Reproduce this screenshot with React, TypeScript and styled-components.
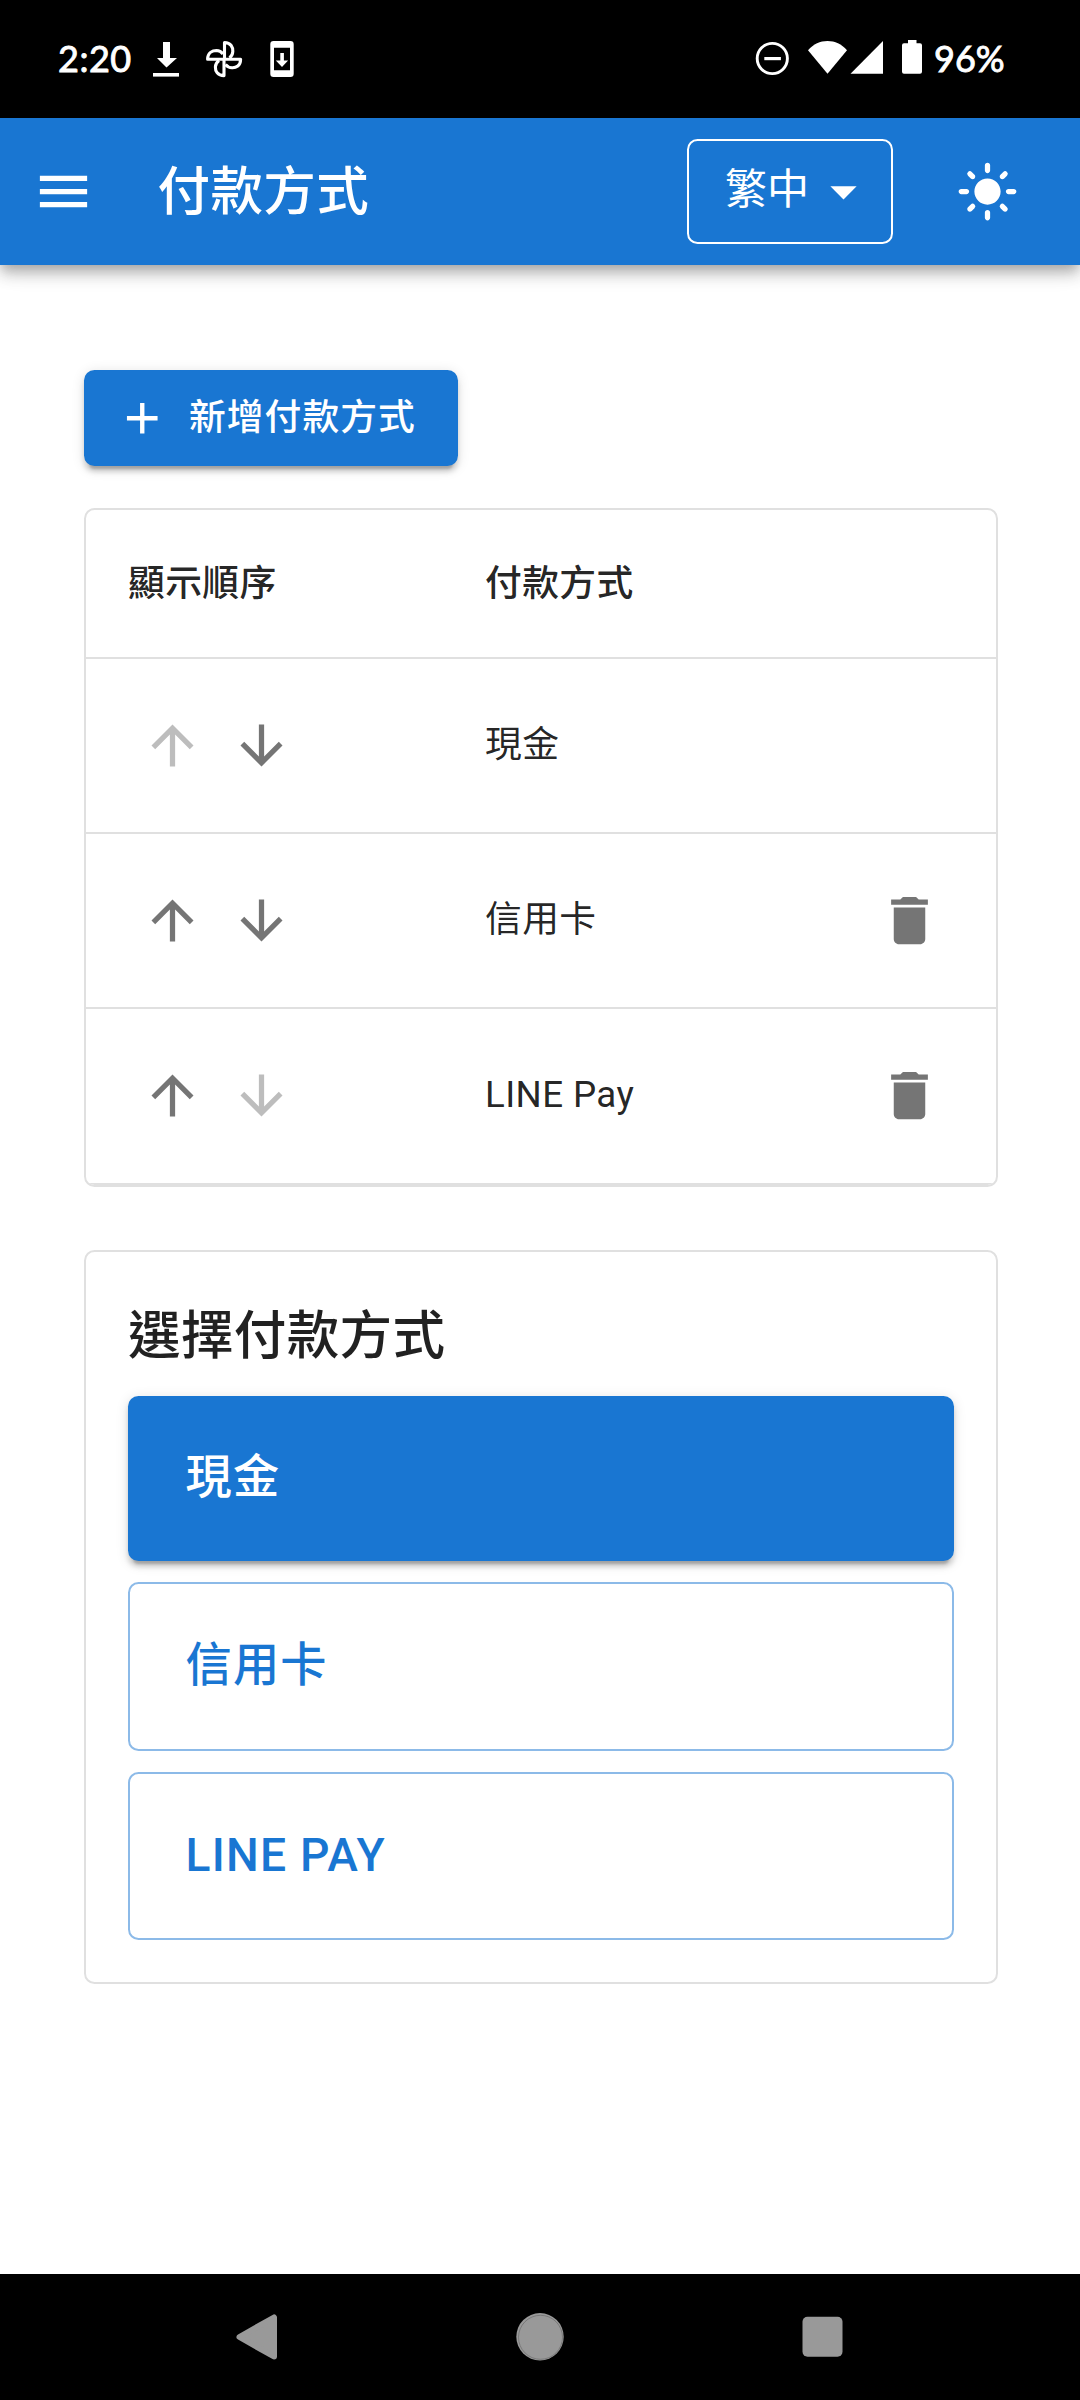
import React, { useState } from "react";
import styled, { createGlobalStyle, css } from "styled-components";
import {
  MdAdd,
  MdArrowDownward,
  MdArrowDropDown,
  MdArrowUpward,
  MdDelete,
  MdLightMode,
  MdMenu,
} from "react-icons/md";

const blue = "#1976d2";
const divider = "#e0e0e0";
const ink = "rgba(0, 0, 0, 0.87)";

const GlobalStyle = createGlobalStyle`
  *, *::before, *::after { box-sizing: border-box; }
  body {
    margin: 0;
    background: #fff;
    color: ${ink};
    font-family: Roboto, "Noto Sans CJK TC", sans-serif;
  }
  button { font-family: inherit; margin: 0; border: 0; background: none; }
  svg { display: block; flex: none; }
`;

const raised = css`
  box-shadow: 0 7.9px 2.6px -5.2px rgba(0, 0, 0, 0.2),
    0 5.2px 5.2px 0 rgba(0, 0, 0, 0.14), 0 2.6px 13.1px 0 rgba(0, 0, 0, 0.12);
`;

const Screen = styled.div`
  width: 1080px;
  height: 2400px;
  display: flex;
  flex-direction: column;
  background: #fff;
  overflow: hidden;
`;

const StatusBar = styled.div`
  height: 118px;
  flex: none;
  background: #000;
  color: #fff;
  display: flex;
  justify-content: space-between;
  padding: 0 76px 0 58px;
`;

const StatusGroup = styled.div<{ $gap: number }>`
  display: flex;
  align-items: center;
  gap: ${(p) => p.$gap}px;
`;

const StatusText = styled.span<{ $width: number; $spacing?: number }>`
  width: ${(p) => p.$width}px;
  padding-bottom: 2px;
  white-space: nowrap;
  font: 400 36px/48px Lato, sans-serif;
  -webkit-text-stroke: 0.9px #fff;
  letter-spacing: ${(p) => p.$spacing ?? 0}px;
`;

const AppBar = styled.header`
  height: 147px;
  flex: none;
  background: ${blue};
  color: #fff;
  display: flex;
  align-items: center;
  padding: 0 40px 0 10.5px;
  box-shadow: 0 5.2px 10.5px -2.6px rgba(0, 0, 0, 0.2),
    0 10.5px 13.1px 0 rgba(0, 0, 0, 0.14), 0 2.6px 26.2px 0 rgba(0, 0, 0, 0.12);
`;

const IconButton = styled.button<{ $pad: number }>`
  display: flex;
  padding: ${(p) => p.$pad}px;
  color: inherit;
`;

const Title = styled.h1`
  margin: 0 auto 0 42px;
  font-size: 52.5px;
  font-weight: 500;
  line-height: 84px;
  letter-spacing: 0.39px;
`;

const LanguageSelect = styled.button`
  width: 206px;
  height: 105px;
  margin-right: 42px;
  padding: 0 16px 0 36px;
  display: flex;
  align-items: center;
  justify-content: space-between;
  border: 2px solid #fff;
  border-radius: 10.5px;
  color: #fff;
  font-size: 42px;
  line-height: 60px;
`;

const LanguageName = styled.span`
  padding-bottom: 3px;
`;

const Main = styled.main`
  flex: 1;
  display: flex;
  flex-direction: column;
  align-items: flex-start;
  padding: 105px 82px 0 84px;
`;

const AddButton = styled.button`
  display: flex;
  align-items: center;
  gap: 21px;
  height: 96px;
  padding: 0 42px 0 31.5px;
  border-radius: 10.5px;
  background: ${blue};
  color: #fff;
  font-size: 36.75px;
  font-weight: 500;
  line-height: 64px;
  letter-spacing: 1.05px;
  ${raised}
`;

const Panel = styled.section`
  width: 100%;
  border: 2px solid ${divider};
  border-radius: 10.5px;
  overflow: hidden;
`;

const TablePanel = styled(Panel)`
  margin-top: 42px;
`;

const Row = styled.div<{ $head?: boolean }>`
  display: grid;
  grid-template-columns: 357px 1fr 173px;
  align-items: center;
  height: ${(p) => (p.$head ? 149 : 175)}px;
  border-bottom: 2px solid ${divider};
  font-size: 36.75px;
  font-weight: ${(p) => (p.$head ? 500 : 400)};
  line-height: ${(p) => (p.$head ? 63 : 52.5)}px;
  letter-spacing: 0.39px;

  &:last-child {
    height: 176px;
    padding-bottom: 1px;
  }
`;

const Cell = styled.div`
  display: flex;
  padding: 0 42px;
`;

const RowAction = styled(IconButton)`
  color: ${(p) => (p.disabled ? "#bdbdbd" : "#757575")};
`;

const ChoicePanel = styled(Panel)`
  margin-top: 63px;
  height: 734px;
  padding: 42px;
`;

const ChoiceTitle = styled.h2`
  margin: 0 0 18px;
  font-size: 52.5px;
  font-weight: 500;
  line-height: 84px;
  letter-spacing: 0.39px;
`;

const ChoiceList = styled.div`
  display: flex;
  flex-direction: column;
  gap: 21px;
`;

const Choice = styled.button<{ $selected: boolean }>`
  width: 100%;
  height: ${(p) => (p.$selected ? 165 : 169)}px;
  padding: 0 ${(p) => (p.$selected ? 57.6 : 55.6)}px 4px;
  border-radius: 10.5px;
  text-align: left;
  text-transform: uppercase;
  font-size: 46.2px;
  font-weight: 500;
  line-height: 80px;
  letter-spacing: 1.2px;
  ${(p) =>
    p.$selected
      ? css`
          background: ${blue};
          color: #fff;
          ${raised}
        `
      : css`
          border: 2px solid rgba(25, 118, 210, 0.5);
          color: ${blue};
        `}

  &:last-child {
    height: 168px;
    padding-bottom: 2px;
  }
`;

const NavBar = styled.nav`
  height: 126px;
  flex: none;
  background: #000;
  display: flex;
  align-items: center;
  justify-content: space-between;
  padding: 0 236px 0 235px;
`;

const NotificationIcons = () => (
  <svg width="146" height="40" viewBox="152 40 146 40" fill="#fff">
    <path d="M163 43h7v16h7l-10.5 9.5L157 59h6z" />
    <path d="M153 74h26v3.6h-26z" />
    <g fill="none" stroke="#fff" strokeWidth="3.1" strokeLinejoin="round">
      <path d="M224.5 60V43.6C231 43.6 233 48.5 232.8 52.5C232.7 55.5 231.3 57.5 229.5 59" />
      <path d="M224 60.3H207.6C207.6 53.8 212.5 51.5 216.5 51.5C219.5 51.6 221.5 53 223 55" />
      <path d="M224 60V76.6C217.5 76.6 215.2 72 215.4 68C215.5 65 217 63 219 61.5" />
      <path d="M224 60.3H240.6C240.6 66.8 236 69 232 68.8C229 68.7 227 67.3 225.5 65.5" />
    </g>
    <path
      fillRule="evenodd"
      d="M273.5 42h17a3.2 3.2 0 0 1 3.2 3.2v29.6a3.2 3.2 0 0 1-3.2 3.2h-17a3.2 3.2 0 0 1-3.2-3.2V45.2a3.2 3.2 0 0 1 3.2-3.2zM274 48.8v22.4h16V48.8z"
    />
    <path d="M280.3 54h3.6v7.4h4.2L282 68l-6.2-6.6h4.5z" />
  </svg>
);

const SystemIcons = () => (
  <svg width="169" height="40" viewBox="755 40 169 40" fill="#fff">
    <circle cx="772.3" cy="59.5" r="15.1" fill="none" stroke="#fff" strokeWidth="2.9" />
    <path d="M764.3 58h16.6v3.2h-16.6z" />
    <path d="M827.5 74.7L808 51.2C813.5 45 820 42 827.5 42S841.5 45 847 51.2z" />
    <path d="M850.5 74.7H883V42z" />
    <path d="M908 41h8.5v3.3h3.5a2 2 0 0 1 2 2v26.4a2 2 0 0 1-2 2h-16a2 2 0 0 1-2-2V46.3a2 2 0 0 1 2-2h4z" />
  </svg>
);

const methods = ["現金", "信用卡", "LINE Pay"];

export default function App() {
  const [selected, setSelected] = useState(0);

  return (
    <>
      <GlobalStyle />
      <Screen>
        <StatusBar>
          <StatusGroup $gap={20}>
            <StatusText $width={74} $spacing={0.5}>2:20</StatusText>
            <NotificationIcons />
          </StatusGroup>
          <StatusGroup $gap={10}>
            <SystemIcons />
            <StatusText $width={70}>96%</StatusText>
          </StatusGroup>
        </StatusBar>

        <AppBar>
          <IconButton $pad={21}>
            <MdMenu size={63} />
          </IconButton>
          <Title>付款方式</Title>
          <LanguageSelect>
            <LanguageName>繁中</LanguageName>
            <MdArrowDropDown size={63} />
          </LanguageSelect>
          <IconButton $pad={21}>
            <MdLightMode size={63} />
          </IconButton>
        </AppBar>

        <Main>
          <AddButton>
            <MdAdd size={52.5} />
            新增付款方式
          </AddButton>

          <TablePanel>
            <Row $head>
              <Cell>顯示順序</Cell>
              <Cell>付款方式</Cell>
              <Cell />
            </Row>
            {methods.map((name, i) => (
              <Row key={name}>
                <Cell>
                  <RowAction $pad={13.1} disabled={i === 0}>
                    <MdArrowUpward size={63} />
                  </RowAction>
                  <RowAction $pad={13.1} disabled={i === methods.length - 1}>
                    <MdArrowDownward size={63} />
                  </RowAction>
                </Cell>
                <Cell>{name}</Cell>
                <Cell>
                  {i > 0 && (
                    <RowAction $pad={13.1}>
                      <MdDelete size={63} />
                    </RowAction>
                  )}
                </Cell>
              </Row>
            ))}
          </TablePanel>

          <ChoicePanel>
            <ChoiceTitle>選擇付款方式</ChoiceTitle>
            <ChoiceList>
              {methods.map((name, i) => (
                <Choice key={name} $selected={i === selected} onClick={() => setSelected(i)}>
                  {name}
                </Choice>
              ))}
            </ChoiceList>
          </ChoicePanel>
        </Main>

        <NavBar>
          <svg width="43" height="48" viewBox="235 2313 43 48">
            <path
              d="M239.5 2337L274 2317.5V2356.5z"
              fill="#999"
              stroke="#999"
              strokeWidth="6"
              strokeLinejoin="round"
            />
          </svg>
          <svg width="48" height="48" viewBox="0 0 48 48">
            <circle cx="24" cy="23.8" r="23.7" fill="#999" />
            <circle cx="24.5" cy="24.3" r="22" fill="none" stroke="#6c6c6c" strokeWidth="0.7" />
          </svg>
          <svg width="42" height="42" viewBox="0 0 42 42">
            <rect x="0.5" y="0.8" width="40" height="40" rx="5" fill="#999" />
          </svg>
        </NavBar>
      </Screen>
    </>
  );
}
